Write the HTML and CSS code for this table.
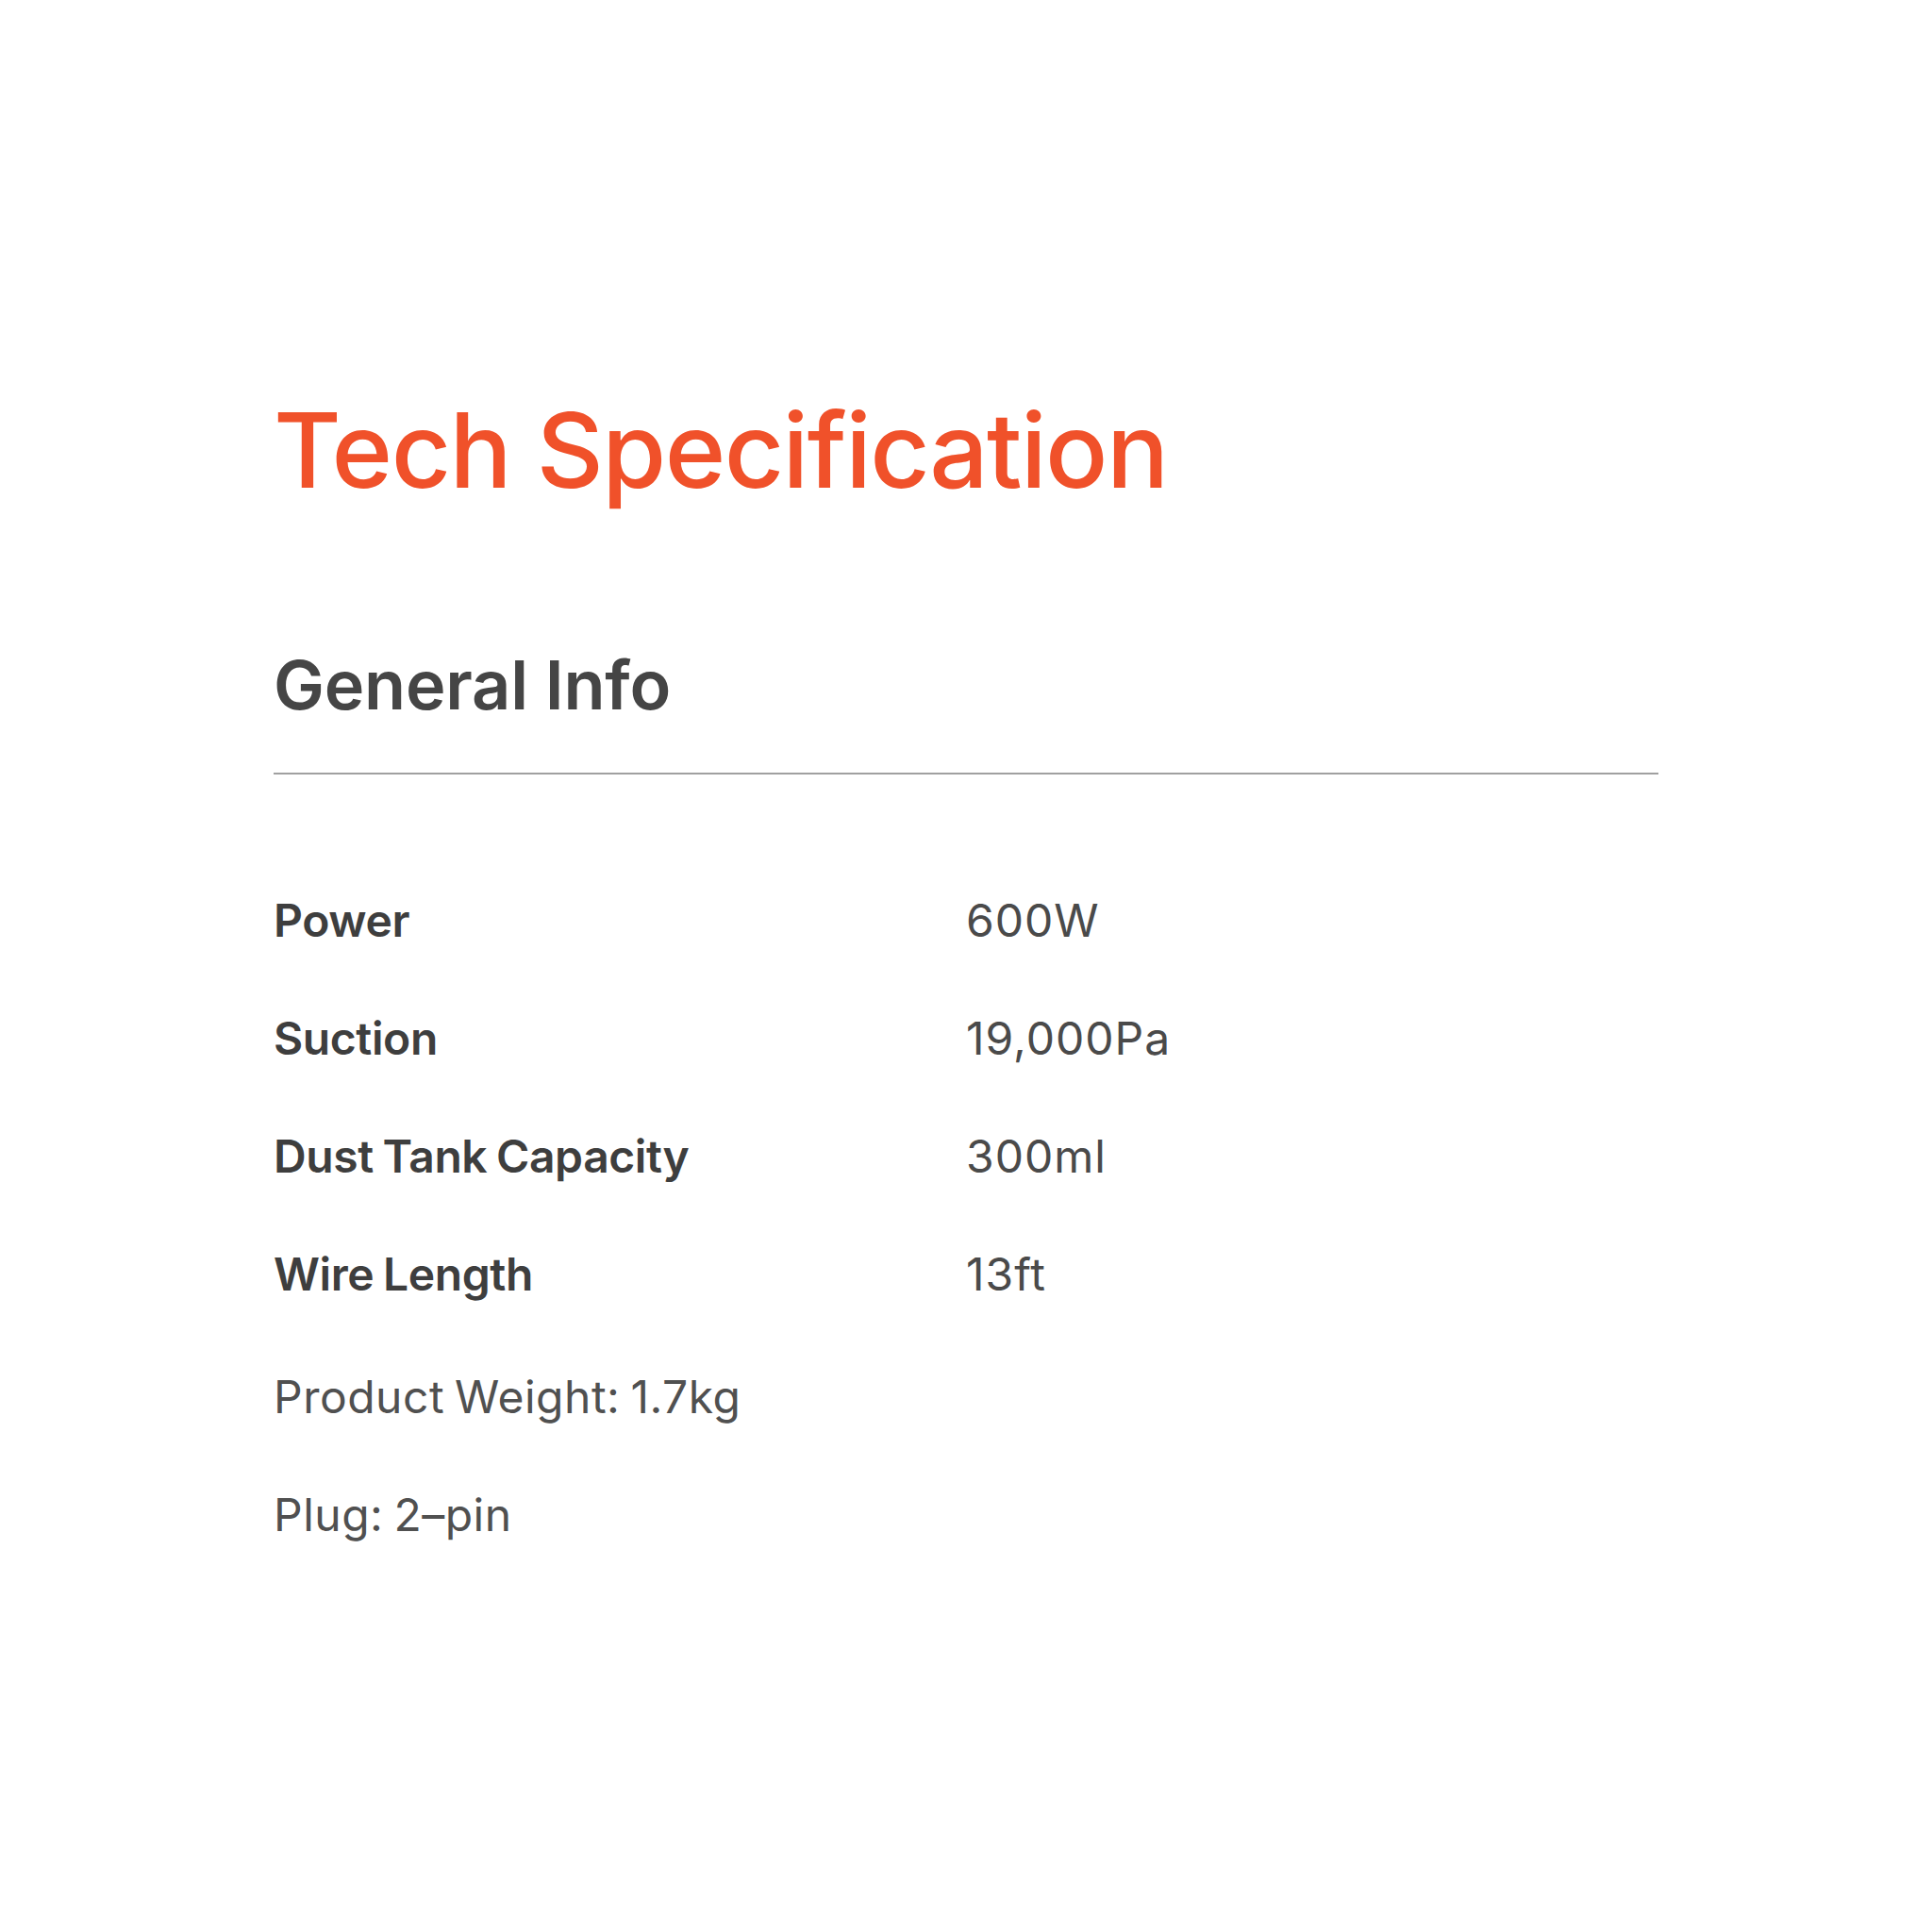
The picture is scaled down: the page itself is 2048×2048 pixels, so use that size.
FILE: index.html
```html
<!DOCTYPE html>
<html lang="en">
<head>
<meta charset="utf-8">
<title>Tech Specification</title>
<link rel="stylesheet" href="styles.css">
</head>
<body>
<main class="spec">
  <h1 class="spec-title">Tech Specification</h1>
  <h2 class="spec-section">General Info</h2>
  <hr class="spec-divider">
  <div class="spec-table">
    <div class="spec-row"><span class="spec-label">Power</span><span class="spec-value">600W</span></div>
    <div class="spec-row"><span class="spec-label">Suction</span><span class="spec-value">19,000Pa</span></div>
    <div class="spec-row"><span class="spec-label">Dust Tank Capacity</span><span class="spec-value">300ml</span></div>
    <div class="spec-row"><span class="spec-label">Wire Length</span><span class="spec-value">13ft</span></div>
  </div>
  <p class="spec-note">Product Weight: 1.7kg</p>
  <p class="spec-note">Plug: 2–pin</p>
</main>
</body>
</html>
```

FILE: styles.css
```css
html, body {
  margin: 0;
  padding: 0;
  background: #ffffff;
}

body {
  font-family: Inter, "Liberation Sans", sans-serif;
  width: 2048px;
  height: 2048px;
}

.spec {
  padding: 411px 0 0 290px;
  width: 1468px;
}

.spec-title {
  margin: 0;
  font-size: 110px;
  line-height: 132px;
  font-weight: 500;
  color: #f0512a;
  letter-spacing: -1.6px;
}

.spec-section {
  margin: 140px 0 0;
  font-size: 72px;
  line-height: 86px;
  font-weight: 600;
  color: #454545;
  letter-spacing: -0.2px;
}

.spec-divider {
  margin: 50px 0 0;
  border: 0;
  height: 2px;
  background: #a0a0a0;
}

.spec-table {
  margin-top: 92px;
  display: flex;
  flex-direction: column;
}

.spec-row {
  display: grid;
  grid-template-columns: 734px 1fr;
  font-size: 48px;
  line-height: 125px;
}

.spec-label {
  font-weight: 600;
  color: #3e3e3e;
  letter-spacing: -0.4px;
  word-spacing: -2px;
}

.spec-value {
  font-weight: 400;
  color: #4a4a4a;
  letter-spacing: 1px;
}

.spec-note {
  margin: 0;
  font-size: 48px;
  line-height: 125px;
  font-weight: 400;
  color: #505050;
  letter-spacing: 0.5px;
  word-spacing: -3px;
}

.spec-note:first-of-type {
  margin-top: 5px;
}
```
